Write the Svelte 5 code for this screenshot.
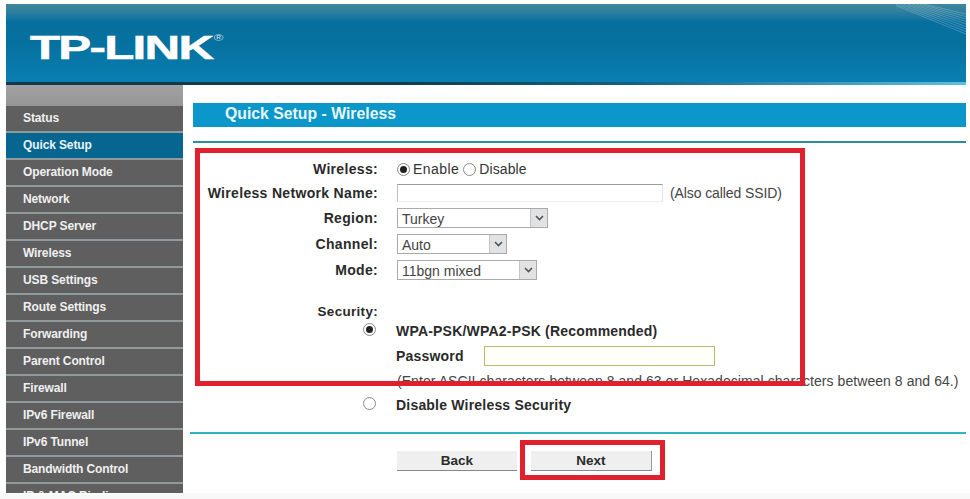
<script>
  const menu = ['Status','Quick Setup','Operation Mode','Network','DHCP Server','Wireless','USB Settings','Route Settings','Forwarding','Parent Control','Firewall','IPv6 Firewall','IPv6 Tunnel','Bandwidth Control','IP & MAC Binding'];
  const stripes = Array.from({length: 9}, (_, i) => i * 4);
</script>

<div class="page">
  <header class="header">
    <div class="logo">TP-LINK<sup>®</sup></div>
    <svg class="stripes" width="70" height="34" viewBox="0 0 70 34" aria-hidden="true">
      {#each stripes as s}
        <line x1={s - 4} y1="0" x2="70" y2={24 - s * 0.62 + 6} stroke="#9cc6d8" stroke-opacity="0.55" stroke-width="0.7"/>
      {/each}
    </svg>
  </header>
  <div class="body">
    <nav class="side">
      <div class="side-top"></div>
      {#each menu as m}
        <div class="item" class:active={m === 'Quick Setup'}>{m}</div>
      {/each}
    </nav>
    <main class="main">
      <div class="title">Quick Setup - Wireless</div>
      <div class="rule top"></div>
      <div class="form">
        <div class="row r1">
          <div class="lab">Wireless:</div>
          <div class="ctl reg">
            <span class="radio on"></span><span class="rt en">Enable</span>
            <span class="radio r2"></span><span class="rt">Disable</span>
          </div>
        </div>
        <div class="row r-name">
          <div class="lab">Wireless Network Name:</div>
          <div class="ctl reg">
            <div class="text-in"></div><span class="note">(Also called SSID)</span>
          </div>
        </div>
        <div class="row r-region">
          <div class="lab">Region:</div>
          <div class="ctl"><div class="sel w151"><span>Turkey</span><i class="arrow"><svg width="9" height="6" viewBox="0 0 9 6"><path d="M1 1l3.5 3.5L8 1" fill="none" stroke="#4a5560" stroke-width="1.6"/></svg></i></div></div>
        </div>
        <div class="row r-channel">
          <div class="lab">Channel:</div>
          <div class="ctl"><div class="sel w110"><span>Auto</span><i class="arrow"><svg width="9" height="6" viewBox="0 0 9 6"><path d="M1 1l3.5 3.5L8 1" fill="none" stroke="#4a5560" stroke-width="1.6"/></svg></i></div></div>
        </div>
        <div class="row r-mode">
          <div class="lab">Mode:</div>
          <div class="ctl"><div class="sel w140"><span>11bgn mixed</span><i class="arrow"><svg width="9" height="6" viewBox="0 0 9 6"><path d="M1 1l3.5 3.5L8 1" fill="none" stroke="#4a5560" stroke-width="1.6"/></svg></i></div></div>
        </div>
        <div class="row r-sec">
          <div class="lab sec">Security:</div>
        </div>
        <div class="row r-wpa">
          <div class="lab"><span class="radio on big"></span></div>
          <div class="ctl strong">WPA-PSK/WPA2-PSK (Recommended)</div>
        </div>
        <div class="row r-pass">
          <div class="lab"></div>
          <div class="ctl strong"><span class="pw-lab">Password</span><div class="pw"></div></div>
        </div>
        <div class="row r-hint">
          <div class="lab"></div>
          <div class="ctl hint">(Enter ASCII characters between 8 and 63 or Hexadecimal characters between 8 and 64.)</div>
        </div>
        <div class="row r-dis">
          <div class="lab"><span class="radio big"></span></div>
          <div class="ctl strong">Disable Wireless Security</div>
        </div>
      </div>
      <div class="rule bottom"></div>
      <div class="btns">
        <div class="btn">Back</div>
        <div class="btn next">Next</div>
      </div>
    </main>
  </div>
  <div class="mark m1"></div>
  <div class="mark m2"></div>
</div>

<style>
  :global(body) { margin: 0; background: #fff; }
  .page { position: relative; width: 970px; height: 499px; overflow: hidden; padding: 4px 4px 0 6px; box-sizing: border-box; font-family: "Liberation Sans", Arial, sans-serif; color: #222; background: linear-gradient(#fff 493px, #f8f8f8 494px); }
  .header { position: relative; height: 81px; box-sizing: border-box; background: linear-gradient(#40869f 0, #2f7f9f 8px, #066f9f 18px, #06719f 40px, #0a7fb2 78px); border-bottom: 3px solid; border-image: linear-gradient(90deg, #123a4c 0, #123a4c 40%, #14617f 65%, #5fc0dc 100%) 1; padding: 27px 0 0 24px; overflow: hidden; }
  .logo { position: relative; color: #fff; font-weight: 700; font-size: 34px; line-height: 32px; transform: scaleX(1.45); transform-origin: left center; width: max-content; letter-spacing: -1.2px; -webkit-text-stroke: 0.5px #fff; }
  .logo sup { position: absolute; font-size: 9px; font-weight: 400; line-height: 10px; top: 2px; left: 100%; margin-left: 1px; letter-spacing: 0; color: #cfe4ec; -webkit-text-stroke: 0; }
  .stripes { position: absolute; right: 0; top: 0; }
  .body { display: flex; height: 408px; }
  .side { width: 177px; background: #5f5f5f; overflow: hidden; flex: none; }
  .side-top { height: 21px; background: linear-gradient(#a2a2a2, #959595); }
  .item { height: 25px; line-height: 25px; padding-left: 17px; color: #f0f0f0; font-weight: 700; font-size: 12px; letter-spacing: -0.12px; border-bottom: 2px solid #8f9a9c; }
  .item.active { background: #07668f; color: #e8f4f8; }
  .main { flex: 1; min-width: 0; padding: 18px 0 0 7px; }
  .title { height: 24px; margin-left: 3px; background: #0b97c9; color: #e6f6fb; font-weight: 700; font-size: 15.8px; line-height: 21px; padding-left: 32px; }
  .rule { height: 2px; }
  .rule.top { margin: 14px 0 0 3px; background: #2a8f9b; }
  .rule.bottom { background: #2fb5c0; margin-top: 15px; }
  .form { margin-top: 14px; font-size: 14px; }
  .row { display: flex; align-items: center; letter-spacing: 0.3px; }
  .lab { width: 188px; flex: none; text-align: right; font-weight: 700; font-size: 14px; letter-spacing: 0.32px; color: #2a2a2a; }
  .lab.sec { font-size: 13.4px; letter-spacing: 0.35px; }
  .ctl { margin-left: 19px; display: flex; align-items: center; }
  .reg { font-size: 14px; color: #333; letter-spacing: 0.1px; }
  .r1, .r-name, .r-wpa, .r-hint, .r-dis { height: 24px; }
  .r-region, .r-channel, .r-mode, .r-pass { height: 26px; }
  .r-sec { height: 30px; align-items: flex-end; margin-top: 6px; }
  .radio { width: 11px; height: 11px; border: 1px solid #8a8a8a; border-radius: 50%; background: #fff; display: inline-block; position: relative; flex: none; }
  .radio.on::after { content: ""; position: absolute; left: 2px; top: 2px; width: 7px; height: 7px; border-radius: 50%; background: #222; }
  .radio.big { margin-right: 2px; }
  .rt { margin-left: 3px; }
  .en { letter-spacing: 0.45px; }
  .r2 { margin-left: 4px; }
  .text-in { width: 264px; height: 16px; border: 1px solid #bdbdbd; border-top-color: #9a9a9a; border-right-color: #e4e4e4; border-bottom-color: #eee; }
  .note { margin-left: 7px; color: #444; font-size: 14px; letter-spacing: -0.1px; }
  .sel { display: flex; align-items: center; justify-content: space-between; box-sizing: border-box; height: 20px; border: 1px solid #aaa; font-size: 14px; color: #444; padding-left: 4px; letter-spacing: 0; background: #fff; }
  .sel span { position: relative; top: 1px; }
  .w151 { width: 151px; } .w110 { width: 110px; } .w140 { width: 140px; }
  .arrow { width: 16px; height: 18px; background: #e2e2e2; border-left: 1px solid #c4c4c4; display: flex; align-items: center; justify-content: center; }
  .strong { font-weight: 700; font-size: 14px; letter-spacing: 0.2px; color: #2a2a2a; margin-left: 18px; }
  .pw-lab { width: 88px; }
  .pw { width: 229px; height: 18px; background: #fffffa; border: 1px solid #c2b46a; }
  .hint { font-weight: 400; font-size: 14px; letter-spacing: 0.06px; color: #444; white-space: nowrap; }
  .btns { display: flex; gap: 14px; margin: 17px 0 0 207px; }
  .btn { width: 120px; height: 19px; line-height: 20px; text-align: center; background: #efefef; border-bottom: 1px solid #888; font-weight: 700; font-size: 13.5px; color: #2a2a2a; }
  .next { border-right: 1px solid #999; }
  .mark { position: absolute; border: 5px solid #e0202c; box-sizing: border-box; pointer-events: none; }
  .m1 { left: 195px; top: 148px; width: 610px; height: 238px; }
  .m2 { left: 520px; top: 440px; width: 145px; height: 40px; }
</style>
